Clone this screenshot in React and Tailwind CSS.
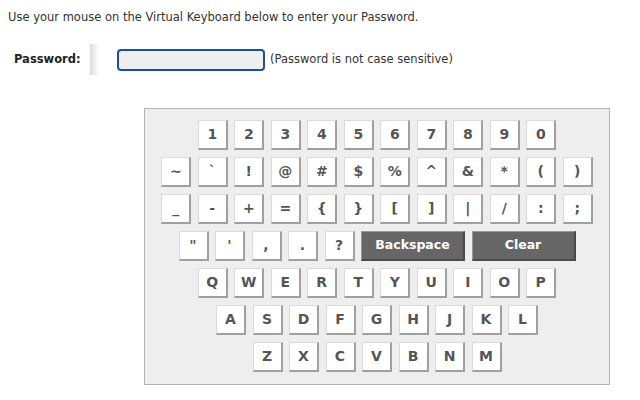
const rows = [
  ["1", "2", "3", "4", "5", "6", "7", "8", "9", "0"],
  ["~", "`", "!", "@", "#", "$", "%", "^", "&", "*", "(", ")"],
  ["_", "-", "+", "=", "{", "}", "[", "]", "|", "/", ":", ";"],
  null,
  ["Q", "W", "E", "R", "T", "Y", "U", "I", "O", "P"],
  ["A", "S", "D", "F", "G", "H", "J", "K", "L"],
  ["Z", "X", "C", "V", "B", "N", "M"],
];

function Key({ label }) {
  return (
    <button className="w-[30px] h-[30px] flex items-center justify-center bg-white border-t border-l border-r-2 border-b-2 border-t-[#dadada] border-l-[#dadada] border-r-[#a0a0a0] border-b-[#a0a0a0] text-[14px] font-bold text-[#555]">
      {label}
    </button>
  );
}

function WideKey({ label }) {
  return (
    <button className="w-[104px] h-[30px] flex items-center justify-center bg-[#666] border-t border-l border-r-2 border-b-2 border-t-[#9a9a9a] border-l-[#9a9a9a] border-r-[#4a4a4a] border-b-[#4a4a4a] text-[12.5px] font-bold text-white">
      {label}
    </button>
  );
}

export default function App() {
  return (
    <div className="w-[640px] h-[400px] bg-white overflow-hidden font-['DejaVu_Sans',Verdana,sans-serif] text-[#333]">
      <p className="pt-[8px] pl-[8px] text-[11.5px] leading-[18px]">
        Use your mouse on the Virtual Keyboard below to enter your Password.
      </p>

      <div className="mt-[18px] h-[31px] flex items-center">
        <span className="pl-[14px] w-[90px] text-[11.5px] font-bold text-[#222]">Password:</span>
        <div className="w-[9px] h-[31px] bg-gradient-to-r from-[#dcdcdc] to-white"></div>
        <input
          type="password"
          className="ml-[18px] w-[148px] h-[22px] rounded-[4px] border-2 border-[#1b4fa6] bg-[#efefef] outline-none"
        />
        <span className="ml-[5px] text-[11.5px] text-[#333]">(Password is not case sensitive)</span>
      </div>

      <div className="mt-[33px] ml-[144px] w-[466px] h-[277px] bg-[#eeeeee] border border-[#b4b4b4] pt-[11px] flex flex-col gap-[7px]">
        {rows.map((row, i) =>
          row ? (
            <div key={i} className="flex justify-center gap-[6.5px]">
              {row.map((k) => (
                <Key key={k} label={k} />
              ))}
            </div>
          ) : (
            <div key={i} className="flex justify-center gap-[6.5px]">
              {['"', "'", ",", ".", "?"].map((k) => (
                <Key key={k} label={k} />
              ))}
              <WideKey label="Backspace" />
              <WideKey label="Clear" />
            </div>
          )
        )}
      </div>
    </div>
  );
}
